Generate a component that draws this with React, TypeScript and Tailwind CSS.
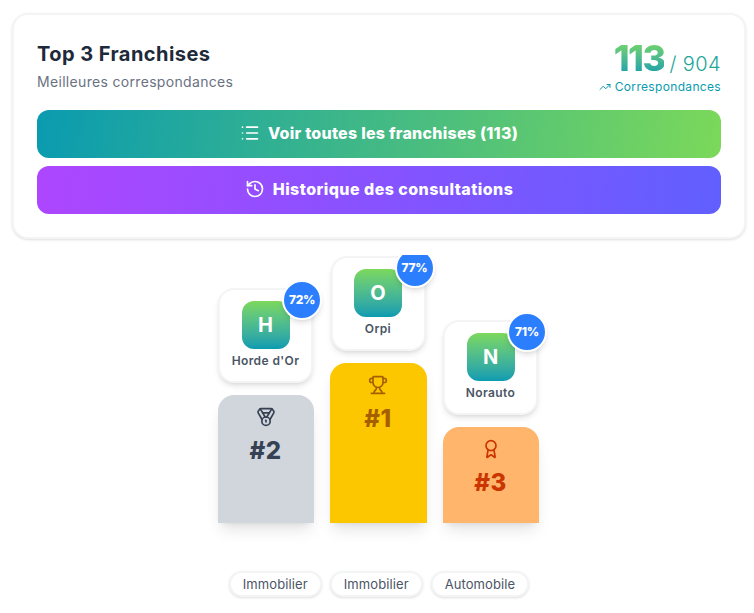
import { Award, History, List, Medal, TrendingUp, Trophy, type LucideIcon } from "lucide-react";

interface Place {
  letter: string;
  name: string;
  score: string;
  rank: string;
  category: string;
  icon: LucideIcon;
  column: string;
  bar: string;
  tone: string;
}

const places: Place[] = [
  { letter: "H", name: "Horde d'Or", score: "72%", rank: "#2", category: "Immobilier", icon: Medal, column: "pt-[32px]", bar: "h-[128px] w-[96px] bg-[#d1d5dc]", tone: "text-[#364153]" },
  { letter: "O", name: "Orpi", score: "77%", rank: "#1", category: "Immobilier", icon: Trophy, column: "pt-0", bar: "h-[160px] w-[97px] bg-[#fdc700]", tone: "text-[#a65f00]" },
  { letter: "N", name: "Norauto", score: "71%", rank: "#3", category: "Automobile", icon: Award, column: "pt-[64px]", bar: "h-[96px] w-[96px] bg-[#ffb56b]", tone: "text-[#ca3500]" },
];

function PodiumColumn({ place }: { place: Place }) {
  const Icon = place.icon;
  return (
    <div className={`flex flex-col items-center ${place.column}`}>
      <div className="relative flex h-[95px] w-[95px] flex-col items-center rounded-2xl border-2 border-[#f3f4f6] bg-white pt-[11px] shadow-[0_4px_6px_-1px_rgba(0,0,0,0.1),0_2px_4px_-2px_rgba(0,0,0,0.1)]">
        <div className="flex h-[48px] w-[48px] shrink-0 items-center justify-center rounded-xl bg-gradient-to-b from-[#7bd85a] to-[#0a9bb0] text-[20px] font-bold text-white">
          {place.letter}
        </div>
        <div className="mt-[2px] whitespace-nowrap text-[12px] font-semibold leading-[20px] tracking-[0.4px] text-[#4a5565]">{place.name}</div>
        <div className="absolute right-[-11px] top-[-10px] flex h-[40px] w-[40px] items-center justify-center rounded-full border-2 border-white bg-[#2b7fff] text-[12px] font-extrabold tracking-[-0.3px] text-white shadow-md">
          {place.score}
        </div>
      </div>
      <div className={`mt-[12px] flex flex-col items-center rounded-t-2xl pt-[12px] shadow-[0_10px_15px_-3px_rgba(0,0,0,0.1),0_4px_6px_-4px_rgba(0,0,0,0.1)] ${place.bar} ${place.tone}`}>
        <Icon size={20} strokeWidth={2} />
        <div className="mt-[8px] text-[24px] font-extrabold leading-[32px] tracking-[0.5px]">{place.rank}</div>
      </div>
    </div>
  );
}

export default function App() {
  return (
    <div className="min-h-[613px] bg-white pl-[12px] pr-[8px] pt-[13px] font-['Inter','Liberation_Sans',sans-serif]">
      <div className="rounded-2xl border-2 border-[#f3f4f6] bg-white px-[23px] pb-[23px] pt-[25px] shadow-sm">
        <div className="flex items-start justify-between">
          <div>
            <h1 className="text-[20px] font-bold leading-[28px] tracking-[0.45px] text-[#1e2939]">Top 3 Franchises</h1>
            <p className="mt-[4px] text-[14px] leading-[20px] tracking-[0.32px] text-[#6a7282]">Meilleures correspondances</p>
          </div>
          <div className="flex flex-col items-end">
            <div className="flex items-baseline gap-[5px] leading-none">
              <span className="bg-gradient-to-b from-[#7bd85a] to-[#0a9bb0] bg-clip-text text-[36px] font-extrabold leading-[36px] tracking-[-1.6px] text-transparent">113</span>
              <span className="text-[20px] font-light leading-[28px] tracking-[0.4px] text-[#22a69a]">/ 904</span>
            </div>
            <div className="mt-[1px] flex items-center gap-[4px] text-[12px] leading-[16px] tracking-[0.33px] text-[#0a9bb0]">
              <TrendingUp size={12} />
              <span>Correspondances</span>
            </div>
          </div>
        </div>
        <div className="mt-[15px] flex flex-col gap-[8px]">
          <button className="flex h-[48px] items-center justify-center gap-[8px] rounded-xl bg-[linear-gradient(95deg,#0a9bb0,#7bd85a)] pb-[2px] text-[16px] font-extrabold tracking-[0.25px] text-white">
            <List size={20} strokeWidth={2} />
            <span>Voir toutes les franchises (113)</span>
          </button>
          <button className="flex h-[48px] items-center justify-center gap-[8px] rounded-xl bg-[linear-gradient(95deg,#ad46ff,#615fff)] pb-[2px] text-[16px] font-extrabold tracking-[0.45px] text-white">
            <History size={20} strokeWidth={2} />
            <span>Historique des consultations</span>
          </button>
        </div>
      </div>
      <div className="mt-[16px] flex justify-center gap-[16px] overflow-hidden pb-[48px] pr-[2px] pt-[1px]">
        {places.map((place) => (
          <PodiumColumn key={place.letter} place={place} />
        ))}
      </div>
      <div className="flex justify-center gap-[8px]">
        {places.map((place) => (
          <span key={place.letter} className="rounded-full border-2 border-[#f3f4f6] bg-white px-[12px] py-[3px] text-[13px] leading-[16px] tracking-[0.1px] text-[#4a5565] shadow-sm">
            {place.category}
          </span>
        ))}
      </div>
    </div>
  );
}
